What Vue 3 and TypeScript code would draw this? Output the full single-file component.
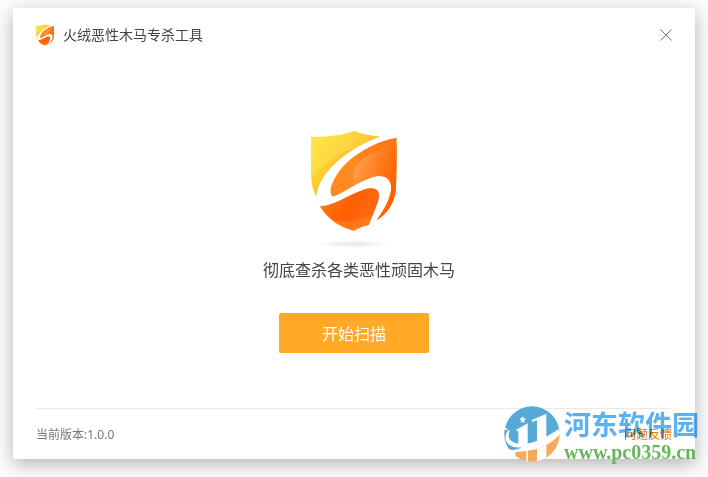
<script setup lang="ts">
import { ref } from 'vue'

const title = '火绒恶性木马专杀工具'
const version = '1.0.0'
const open = ref(true)
const scanning = ref(false)
</script>

<template>
  <main class="desktop">
    <svg class="definitions" width="0" height="0" aria-hidden="true">
      <defs>
        <linearGradient id="shield-yellow" x1="0" y1="0" x2="1" y2="0.6">
          <stop offset="0" stop-color="#ffe53a" />
          <stop offset="0.45" stop-color="#fdc930" />
          <stop offset="1" stop-color="#ff9d1c" />
        </linearGradient>
        <linearGradient id="shield-orange" x1="0.9" y1="0" x2="0.3" y2="1">
          <stop offset="0" stop-color="#ff7410" />
          <stop offset="0.5" stop-color="#ff8a20" />
          <stop offset="1" stop-color="#ff8c20" />
        </linearGradient>
        <linearGradient id="shield-inner" gradientUnits="userSpaceOnUse" x1="145" y1="150" x2="260" y2="190">
          <stop offset="0" stop-color="#ff9c48" />
          <stop offset="0.5" stop-color="#ff7d20" />
          <stop offset="1" stop-color="#ff6200" />
        </linearGradient>
        <linearGradient id="shield-bottom" x1="0" y1="0.2" x2="0.8" y2="0.6">
          <stop offset="0" stop-color="#ff7d14" />
          <stop offset="0.6" stop-color="#ff5f00" />
          <stop offset="1" stop-color="#ff6810" />
        </linearGradient>
        <clipPath id="blade">
          <path d="M273 38 C218 46 139 87 101 139 C76 175 70 202 82 213 C104 211 148 174 195 157 C236 144 257 160 257 187 C255 224 232 257 213 284 C245 265 267 233 271 190 Q274 112 273 38Z" />
        </clipPath>
        <symbol id="shield" viewBox="18 18 256 298">
          <path fill="url(#shield-yellow)" d="M18 36 Q100 36 146 18 Q180 31 224 35 C170 53 107 90 68 138 Q38 173 33 215 Q19 185 18 150Z" />
          <path fill="#fff36a" opacity=".28" d="M18 36 Q100 36 146 18 Q180 31 224 35 Q195 44 162 65 Q75 86 20 159 L18 150Z" />
          <path fill="url(#shield-orange)" d="M273 38 C218 46 139 87 101 139 C76 175 70 202 82 213 C104 211 148 174 195 157 C236 144 257 160 257 187 C255 224 232 257 213 284 C245 265 267 233 271 190 Q274 112 273 38Z" />
          <path clip-path="url(#blade)" fill="url(#shield-inner)" d="M275 59 C210 68 139 108 143 158 Q144 180 153 200 L205 295 L275 280Z" />
          <path fill="url(#shield-bottom)" d="M44 242 C85 243 137 202 184 190 C219 184 227 202 217 231 L190 298 Q162 304 146 315 Q78 297 44 242Z" />
          <path fill="#ff8b27" opacity=".45" d="M75 281 Q143 297 203 267 L190 298 Q162 304 146 315 Q103 305 75 281Z" />
        </symbol>
      </defs>
    </svg>

    <section v-if="open" class="window" :aria-label="title">
      <header class="titlebar">
        <svg class="brand-icon" aria-hidden="true"><use href="#shield" /></svg>
        <h1>{{ title }}</h1>
        <button class="close" type="button" aria-label="关闭" @click="open = false">
          <svg viewBox="0 0 12 12" aria-hidden="true"><path d="M.5.5l11 11M11.5.5l-11 11" /></svg>
        </button>
      </header>

      <div class="content">
        <svg class="shield" aria-hidden="true"><use href="#shield" /></svg>
        <div class="shield-shadow"></div>
        <p>彻底查杀各类恶性顽固木马</p>
        <button class="scan" type="button" :aria-pressed="scanning" @click="scanning = true">开始扫描</button>
      </div>

      <footer>
        <span>当前版本:{{ version }}</span>
        <a href="#feedback">问题反馈</a>
      </footer>
    </section>

    <aside class="watermark">
      <svg class="site-logo" viewBox="8 8 168 168" aria-hidden="true">
        <defs>
          <clipPath id="globe"><circle cx="92" cy="92" r="83" /></clipPath>
        </defs>
        <g clip-path="url(#globe)">
          <path fill="#57a9d8" d="M8 8H176V84Q132 125 62 127Q24 125 20 100L8 115Z" />
          <path fill="#fff" d="M8 70L25 83Q15 105 36 117Q85 137 176 75V92Q115 146 40 142L8 125Z" />
          <path fill="#57a9d8" d="M21 80Q2 104 24 125Q38 135 63 132Q27 151 8 125V80Z" />
          <path fill="#f5aa5b" d="M42 146Q132 144 176 92V176H42Z" />
          <path fill="#fff" d="M45 79L79 60V122L51 123V83L45 84ZM92 50L135 31V109L107 118V51L92 56Z" />
          <path fill="#fff" d="M75 143L80 142V176H75ZM107 137L135 125V176H107Z" />
          <path fill="#fff" d="M64 39l3 6 7 1-5 5 1 7-6-3-6 3 1-7-5-5 7-1Z" />
        </g>
      </svg>
      <div class="site-text">
        <strong class="site-name">河东软件园</strong>
        <span class="site-address">www.pc0359.cn</span>
      </div>
    </aside>
  </main>
</template>

<style>
body {
  margin: 0;
}
</style>

<style scoped>
.desktop {
  position: relative;
  box-sizing: border-box;
  display: flex;
  min-height: 100vh;
  padding: 8px 13px 18px;
  overflow: hidden;
  background: #fdfdfd;
  font-family: "Noto Sans", "Noto Sans CJK SC", sans-serif;
}

.definitions {
  position: absolute;
}

.window {
  display: flex;
  flex: 1;
  flex-direction: column;
  background: #fff;
  box-shadow: 0 5px 18px rgba(0, 0, 0, 0.3);
}

.titlebar {
  display: flex;
  align-items: center;
  height: 24px;
  padding: 15px 23px 0;
}

.brand-icon {
  width: 18px;
  height: 22px;
}

h1 {
  margin: 0 0 0 9px;
  color: #444;
  font-size: 14px;
  font-weight: 400;
  line-height: 20px;
}

button {
  border: 0;
  font-family: inherit;
  cursor: pointer;
}

.close {
  display: flex;
  margin-left: auto;
  padding: 0;
  background: transparent;
}

.close svg {
  width: 12px;
  height: 12px;
  fill: none;
  stroke: #777;
}

.content {
  display: flex;
  flex: 1;
  flex-direction: column;
  align-items: center;
  padding-top: 84px;
}

.shield {
  width: 86px;
  height: 100px;
}

.shield-shadow {
  width: 70px;
  height: 8px;
  margin-top: 9px;
  background: radial-gradient(ellipse closest-side, #e5e4e3, #f4f4f4 60%, transparent);
}

.content p {
  margin: 10px 0 0;
  padding-left: 10px;
  color: #444;
  font-size: 16px;
  line-height: 24px;
}

.scan {
  width: 150px;
  height: 40px;
  margin-top: 31px;
  border-radius: 2px;
  background: #ffa926;
  color: #fff;
  font-size: 16px;
}

footer {
  display: flex;
  align-items: center;
  justify-content: space-between;
  height: 50px;
  margin: 0 23px;
  border-top: 1px solid #e9e9e9;
  color: #777;
  font-size: 12px;
}

footer a {
  color: #e67a10;
  text-decoration: none;
}

.watermark {
  position: absolute;
  right: 9px;
  bottom: 15px;
  display: flex;
  gap: 4px;
  pointer-events: none;
}

.site-logo {
  width: 56px;
  height: 56px;
}

.site-text {
  display: flex;
  flex-direction: column;
}

.site-name {
  color: #5ab2f4;
  font-family: "Noto Sans CJK SC", sans-serif;
  font-size: 27px;
  line-height: 36px;
  mix-blend-mode: multiply;
}

.site-address {
  color: #66b85d;
  font-family: "Liberation Serif", serif;
  font-size: 20px;
  font-weight: 700;
  line-height: 20px;
}
</style>
